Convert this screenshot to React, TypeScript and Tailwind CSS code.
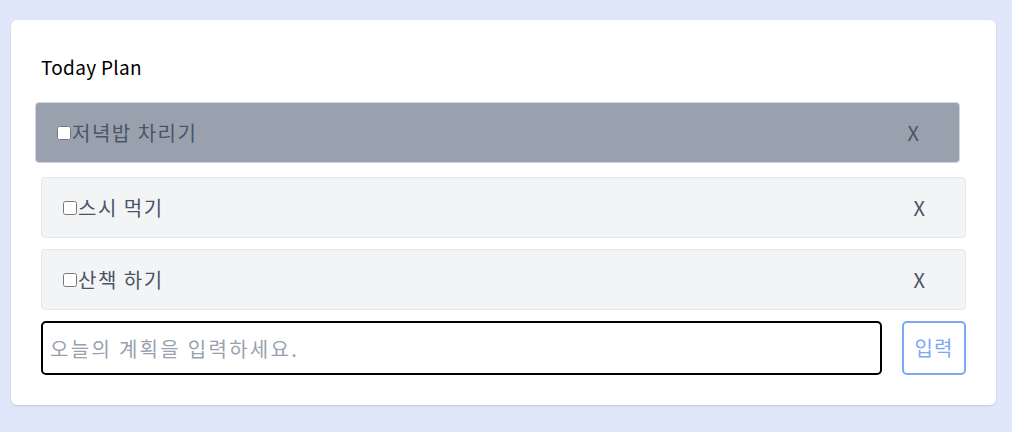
const items = [
  { id: 1, text: '저녁밥 차리기', dragging: true },
  { id: 2, text: '스시 먹기', dragging: false },
  { id: 3, text: '산책 하기', dragging: false },
];

const TodoItem = ({ text, dragging }: { text: string; dragging: boolean }) => (
  <div
    className={`flex h-[61px] items-center justify-between rounded border pl-[21px] pr-[40px] ${
      dragging
        ? 'ml-[-6px] mr-[6px] mt-[-3px] mb-[3px] border-gray-300 bg-gray-400'
        : 'border-gray-200 bg-gray-100'
    }`}
  >
    <label className="flex items-center text-[20px] tracking-[1.5px] text-gray-600">
      <input type="checkbox" className="h-[14px] w-[14px]" />
      <span className="ml-[1px]">{text}</span>
    </label>
    <button className="text-[20px] text-gray-600">X</button>
  </div>
);

export default function App() {
  return (
    <div
      className="min-h-[432px] bg-[#e0e7fb] pl-[11px] pr-[16px] pt-[20px] pb-[27px]"
      style={{ fontFamily: '"Noto Sans CJK KR", "Noto Sans", sans-serif' }}
    >
      <div className="rounded-md bg-white px-[30px] pt-[34px] pb-[30px] shadow">
        <h1 className="text-[19px] leading-[26px] tracking-[0.3px] text-black">Today Plan</h1>
        <div className="mt-[25px] flex flex-col gap-[11px]">
          {items.map((it) => (
            <TodoItem key={it.id} text={it.text} dragging={it.dragging} />
          ))}
        </div>
        <div className="mt-[11px] flex items-center gap-[20px]">
          <input
            autoFocus
            placeholder="오늘의 계획을 입력하세요."
            className="h-[54px] flex-1 rounded-[5px] border-2 border-black px-[7px] text-[20px] tracking-[2.3px] text-gray-700 placeholder:text-gray-400 outline-none"
          />
          <button className="h-[54px] w-[64px] rounded-[5px] border-2 border-[#7ea6f6] text-[20px] tracking-[1px] text-[#7ea6f6]">
            입력
          </button>
        </div>
      </div>
    </div>
  );
}
